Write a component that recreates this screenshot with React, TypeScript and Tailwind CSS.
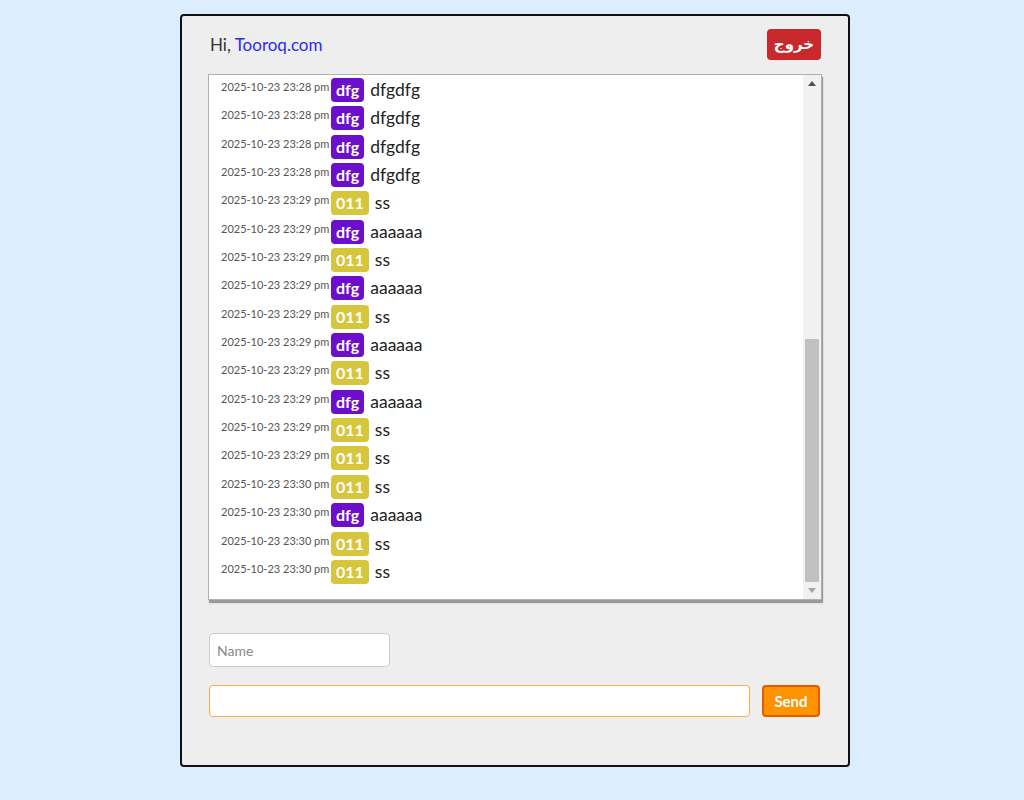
import React from "react";

type Msg = { t: string; who: "dfg" | "011"; text: string };

const rows: Msg[] = [
  { t: "2025-10-23 23:28 pm", who: "dfg", text: "dfgdfg" },
  { t: "2025-10-23 23:28 pm", who: "dfg", text: "dfgdfg" },
  { t: "2025-10-23 23:28 pm", who: "dfg", text: "dfgdfg" },
  { t: "2025-10-23 23:28 pm", who: "dfg", text: "dfgdfg" },
  { t: "2025-10-23 23:29 pm", who: "011", text: "ss" },
  { t: "2025-10-23 23:29 pm", who: "dfg", text: "aaaaaa" },
  { t: "2025-10-23 23:29 pm", who: "011", text: "ss" },
  { t: "2025-10-23 23:29 pm", who: "dfg", text: "aaaaaa" },
  { t: "2025-10-23 23:29 pm", who: "011", text: "ss" },
  { t: "2025-10-23 23:29 pm", who: "dfg", text: "aaaaaa" },
  { t: "2025-10-23 23:29 pm", who: "011", text: "ss" },
  { t: "2025-10-23 23:29 pm", who: "dfg", text: "aaaaaa" },
  { t: "2025-10-23 23:29 pm", who: "011", text: "ss" },
  { t: "2025-10-23 23:29 pm", who: "011", text: "ss" },
  { t: "2025-10-23 23:30 pm", who: "011", text: "ss" },
  { t: "2025-10-23 23:30 pm", who: "dfg", text: "aaaaaa" },
  { t: "2025-10-23 23:30 pm", who: "011", text: "ss" },
  { t: "2025-10-23 23:30 pm", who: "011", text: "ss" },
];

function Row({ m }: { m: Msg }) {
  return (
    <div className="flex items-start h-[28.35px] pt-[3px]">
      <span className="text-[11px] leading-[13px] text-[#555] mt-[2px] w-[110px] whitespace-nowrap">{m.t}</span>
      <span
        className={
          "h-[24px] px-[5px] rounded-[4px] text-white font-bold text-[16px] leading-[24px] " +
          (m.who === "dfg" ? "bg-[#6c0fcc]" : "bg-[#d6c63c]")
        }
      >
        {m.who}
      </span>
      <span className="ml-[6px] text-[17.5px] leading-[24px] text-[#222]">{m.text}</span>
    </div>
  );
}

export default function App() {
  return (
    <div className="min-h-[800px] bg-[#dbedff] pt-[14px] font-['Lato','DejaVu_Sans',sans-serif]">
      <div className="ml-[180px] w-[670px] h-[753px] bg-[#eeeeee] border-2 border-[#111] rounded-[4px] px-[26px] pt-[13px]">
        <div className="flex items-center justify-between h-[31px]">
          <div className="text-[17px] text-[#333] ml-[2px]">
            Hi, <span className="text-[#2a2af5]">Tooroq.com</span>
          </div>
          <button className="h-[31px] w-[54px] rounded-[4px] bg-[#c9282d] text-white font-bold text-[15px] font-['DejaVu_Sans','Lato',sans-serif] mr-[1px]">
            خروج
          </button>
        </div>
        <div className="mt-[14px] h-[526px] bg-white border border-[#b0b0b0] shadow-[1px_3px_1px_#9a9a9a] flex">
          <div className="flex-1 overflow-hidden pl-[12px]">
            {rows.map((m, i) => (
              <Row key={i} m={m} />
            ))}
          </div>
          <div className="w-[18px] bg-[#f1f1f1] flex flex-col items-center">
            <div className="h-[17px] w-full flex items-center justify-center">
              <svg width="8" height="5" viewBox="0 0 8 5"><path d="M0 5 L4 0 L8 5 Z" fill="#505050" /></svg>
            </div>
            <div className="flex-1 w-full flex flex-col px-[2px]">
              <div className="h-[247px]" />
              <div className="flex-1 bg-[#c1c1c1]" />
            </div>
            <div className="h-[17px] w-full flex items-center justify-center">
              <svg width="8" height="5" viewBox="0 0 8 5"><path d="M0 0 L4 5 L8 0 Z" fill="#a3a3a3" /></svg>
            </div>
          </div>
        </div>
        <div className="mt-[33px] ml-px">
          <input
            placeholder="Name"
            className="w-[181px] h-[34px] bg-white border border-[#cccccc] rounded-[4px] px-[7px] text-[14px] placeholder:text-[#888] outline-none"
          />
        </div>
        <div className="mt-[18px] ml-px flex items-center gap-[12px]">
          <input className="w-[541px] h-[32px] bg-white border border-[#f7b04a] rounded-[4px] px-[7px] text-[14px] outline-none" />
          <button className="w-[58px] h-[32px] bg-[#ff9200] border-2 border-[#e55a00] rounded-[4px] text-white font-bold text-[15px]">
            Send
          </button>
        </div>
      </div>
    </div>
  );
}
